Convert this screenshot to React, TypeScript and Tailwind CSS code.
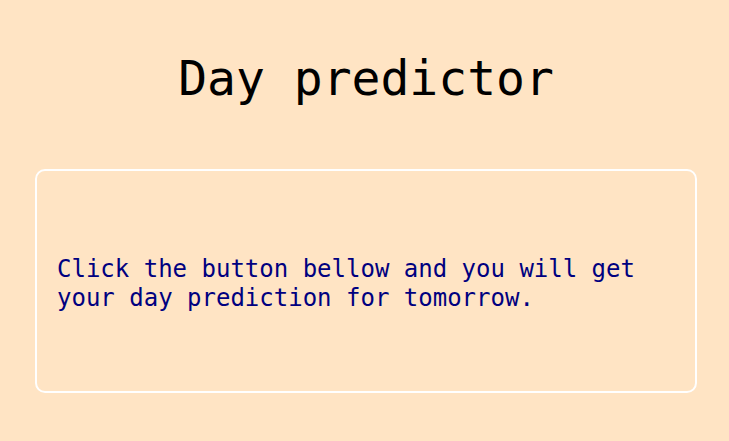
import React from "react";

export default function App() {
  return (
    <div
      className="min-h-[441px] w-full bg-[#ffe4c4] pl-[35px] pr-[32px] pt-[42px]"
      style={{ fontFamily: '"DejaVu Sans Mono", monospace' }}
    >
      <h1 className="text-center text-[48px] leading-[72px] text-black">Day predictor</h1>
      <div className="mt-[55px] flex h-[224px] items-center rounded-[10px] border-2 border-white pl-[20px] pr-[20px] pt-[5px]">
        <p className="text-[24px] leading-[29px] text-[#000080]">
          Click the button bellow and you will get your day prediction for tomorrow.
        </p>
      </div>
    </div>
  );
}
